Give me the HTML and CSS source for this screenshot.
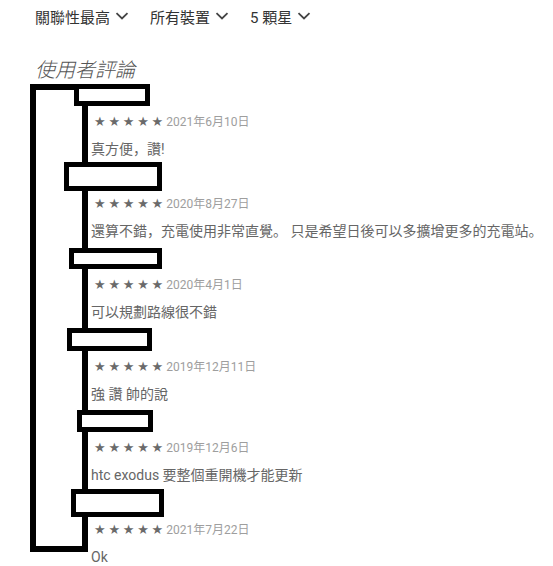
FILE: index.html
```html
<!DOCTYPE html>
<html lang="zh-Hant">
<head>
<meta charset="utf-8">
<link rel="stylesheet" href="styles.css">
</head>
<body>
<div class="filters">
  <span class="filter">關聯性最高<svg class="chev" viewBox="0 0 14 8"><path d="M1.5 1.2 L7 6.5 L12.5 1.2" /></svg></span>
  <span class="filter f2">所有裝置<svg class="chev" viewBox="0 0 14 8"><path d="M1.5 1.2 L7 6.5 L12.5 1.2" /></svg></span>
  <span class="filter f3">5 顆星<svg class="chev" viewBox="0 0 14 8"><path d="M1.5 1.2 L7 6.5 L12.5 1.2" /></svg></span>
</div>
<h2 class="heading">使用者評論</h2>
<div class="main">
  <div class="rail"></div>
  <div class="reviews">
    <div class="review">
      <div class="head"><div class="name n1"></div></div>
      <div class="meta"><span class="stars">★ ★ ★ ★ ★</span> <span class="date">2021年6月10日</span></div>
      <div class="text">真方便，讚!</div>
    </div>
    <div class="review">
      <div class="head"><div class="name n2"></div></div>
      <div class="meta"><span class="stars">★ ★ ★ ★ ★</span> <span class="date">2020年8月27日</span></div>
      <div class="text">還算不錯，充電使用非常直覺。 只是希望日後可以多擴增更多的充電站。</div>
    </div>
    <div class="review">
      <div class="head"><div class="name n3"></div></div>
      <div class="meta"><span class="stars">★ ★ ★ ★ ★</span> <span class="date">2020年4月1日</span></div>
      <div class="text">可以規劃路線很不錯</div>
    </div>
    <div class="review">
      <div class="head"><div class="name n4"></div></div>
      <div class="meta"><span class="stars">★ ★ ★ ★ ★</span> <span class="date">2019年12月11日</span></div>
      <div class="text">強 讚 帥的說</div>
    </div>
    <div class="review">
      <div class="head"><div class="name n5"></div></div>
      <div class="meta"><span class="stars">★ ★ ★ ★ ★</span> <span class="date">2019年12月6日</span></div>
      <div class="text">htc exodus 要整個重開機才能更新</div>
    </div>
    <div class="review">
      <div class="head"><div class="name n6"></div></div>
      <div class="meta"><span class="stars">★ ★ ★ ★ ★</span> <span class="date">2021年7月22日</span></div>
      <div class="text">Ok</div>
    </div>
  </div>
</div>
</body>
</html>
```
FILE: styles.css
```css
html, body {
  margin: 0;
  padding: 0;
  background: #fff;
}
body {
  font-family: Roboto, "Noto Sans CJK JP", "Noto Sans CJK TC", "Noto Sans", sans-serif;
  overflow: hidden;
}
.filters {
  display: flex;
  height: 32px;
  align-items: center;
  padding-left: 35px;
  font-size: 15px;
  color: #333;
}
.filter {
  display: flex;
  align-items: center;
  white-space: nowrap;
}
.f2 { margin-left: 21px; }
.f3 { margin-left: 21px; }
.chev {
  width: 14px;
  height: 8px;
  margin-left: 5px;
  fill: none;
  stroke: #444;
  stroke-width: 1.8;
}
.heading {
  margin: 28px 0 0 35px;
  height: 20px;
  font-size: 20px;
  line-height: 20px;
  font-weight: 300;
  font-style: italic;
  color: #555;
}
.main {
  display: flex;
  margin-left: 30px;
}
.rail {
  flex: none;
  width: 46px;
  height: 456px;
  margin-top: 4px;
  border: 6px solid #000;
}
.reviews {
  flex: 1;
  margin-left: 3px;
}
.review {
  height: 81.5px;
}
.head {
  height: 30px;
  display: flex;
  align-items: center;
}
.name {
  box-sizing: border-box;
  border: 5px solid #000;
  background: #fff;
}
.n1 { width: 76px; height: 22px; margin-left: -17px; }
.n2 { width: 98px; height: 29px; margin-left: -27px; }
.n3 { width: 93px; height: 21px; margin-left: -22px; }
.n4 { width: 85px; height: 23px; margin-left: -24px; }
.n5 { width: 76px; height: 22px; margin-left: -14px; }
.n6 { width: 93px; height: 28px; margin-left: -20px; }
.meta {
  height: 24px;
  line-height: 24px;
  font-size: 12px;
  white-space: nowrap;
  padding-left: 3px;
}
.stars {
  color: #6a6a6a;
  font-family: "DejaVu Sans", sans-serif;
  font-size: 13px;
  word-spacing: -1.4px;
}
.date {
  color: #9e9e9e;
}
.text {
  margin-top: 4px;
  line-height: 23.5px;
  font-size: 14px;
  color: #666;
  white-space: nowrap;
  font-feature-settings: "locl" 0;
}
```
